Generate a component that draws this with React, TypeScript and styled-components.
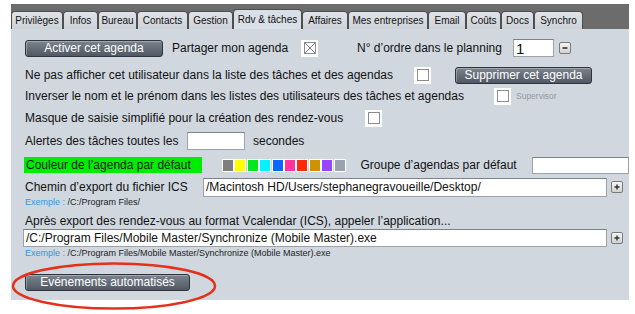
import styled, { createGlobalStyle } from 'styled-components';

const GlobalStyle = createGlobalStyle`
  body {
    margin: 0;
    background: #fff;
    font-family: "Liberation Sans", Arial, sans-serif;
  }
`;

const Page = styled.div`
  position: relative;
  width: 635px;
  height: 314px;
  padding: 4px 0 0 11px;
  box-sizing: border-box;
  overflow: hidden;
`;

const TabBar = styled.div`
  width: 618px;
  height: 25px;
  background: #6c6c6c;
  display: flex;
  align-items: flex-end;
`;

const Tab = styled.div<{ $w: number; $active?: boolean }>`
  width: ${(p) => p.$w}px;
  height: ${(p) => (p.$active ? 20 : 18)}px;
  box-sizing: border-box;
  border: 1px solid #4e4e4e;
  border-bottom: none;
  border-radius: 4px 4px 0 0;
  background: ${(p) => (p.$active ? '#d9dfe6' : 'linear-gradient(#e0e4e8, #cdd2d8)')};
  font-size: 10px;
  color: #111;
  display: flex;
  align-items: center;
  justify-content: center;
  white-space: nowrap;
`;

const Panel = styled.div`
  width: 618px;
  height: 271px;
  background: #d0d7df;
  padding: 9px 0 0 14px;
  box-sizing: border-box;
  display: flex;
  flex-direction: column;
`;

const Row = styled.div<{ $h: number; $mt?: number }>`
  display: flex;
  align-items: center;
  height: ${(p) => p.$h}px;
  margin-top: ${(p) => p.$mt ?? 0}px;
`;

const Label = styled.span<{ $w?: number; $ml?: number }>`
  flex: none;
  font-size: 12px;
  color: #111;
  white-space: nowrap;
  ${(p) => (p.$w ? `width: ${p.$w}px;` : '')}
  margin-left: ${(p) => p.$ml ?? 0}px;
`;

const ColorLabel = styled(Label)`
  background: #00ec00;
  height: 16px;
  line-height: 16px;
  padding-left: 2px;
  box-sizing: border-box;
  color: #1a1a1a;
`;

const Button = styled.button<{ $w: number; $ml?: number }>`
  flex: none;
  width: ${(p) => p.$w}px;
  height: 17px;
  margin-left: ${(p) => p.$ml ?? 0}px;
  padding: 0;
  border: 1px solid #2f343a;
  border-radius: 3px;
  background: linear-gradient(#7a838e, #505864);
  box-shadow: inset 1px 1px 0 rgba(255, 255, 255, 0.3);
  color: #fff;
  font-family: "Liberation Sans", Arial, sans-serif;
  font-size: 12px;
  line-height: 15px;
`;

const CheckBox = styled.span<{ $ml?: number }>`
  flex: none;
  width: 17px;
  height: 17px;
  margin-left: ${(p) => p.$ml ?? 0}px;
  background: #fff;
  display: flex;
  align-items: center;
  justify-content: center;

  & > span {
    width: 12px;
    height: 12px;
    box-sizing: border-box;
    border: 1px solid #8c8c8c;
    display: flex;
  }
`;

const TextBox = styled.div<{ $w: number; $h: number; $ml?: number; $size?: number }>`
  flex: none;
  width: ${(p) => p.$w}px;
  height: ${(p) => p.$h}px;
  margin-left: ${(p) => p.$ml ?? 0}px;
  box-sizing: border-box;
  background: #fff;
  border: 1px solid #9ca2a8;
  border-top-color: #7c8288;
  padding: 0 2px;
  font-size: ${(p) => p.$size ?? 12}px;
  color: #111;
  display: flex;
  align-items: center;
  white-space: nowrap;
  overflow: hidden;
`;

const MiniButton = styled.span<{ $ml?: number }>`
  flex: none;
  width: 12px;
  height: 12px;
  margin-left: ${(p) => p.$ml ?? 4}px;
  box-sizing: border-box;
  border: 1px solid #7a7a7a;
  border-radius: 2px;
  background: linear-gradient(#f4f4f4, #d2d2d2);
  display: flex;
  align-items: center;
  justify-content: center;
`;

const Swatches = styled.div<{ $ml?: number }>`
  flex: none;
  display: flex;
  gap: 0.4px;
  margin-left: ${(p) => p.$ml ?? 0}px;
`;

const Swatch = styled.span<{ $c: string }>`
  width: 12px;
  height: 13px;
  box-sizing: border-box;
  border: 1px solid #fff;
  background: ${(p) => p.$c};
`;

const Hint = styled.div<{ $mt?: number }>`
  font-size: 9px;
  color: #222;
  height: 10px;
  line-height: 10px;
  margin-top: ${(p) => p.$mt ?? 0}px;
  white-space: nowrap;

  & b {
    font-weight: normal;
    color: #2f9be2;
  }
`;

const Small = styled.span`
  font-size: 8.5px;
  color: #959aa0;
  margin-left: 5px;
`;

const Annotation = styled.svg`
  position: absolute;
  left: 11px;
  top: 262px;
`;

const tabs: [string, number][] = [
  ['Privilèges', 52],
  ['Infos', 35],
  ['Bureau', 39],
  ['Contacts', 51],
  ['Gestion', 45],
  ['Rdv & tâches', 69],
  ['Affaires', 46],
  ['Mes entreprises', 80],
  ['Email', 38],
  ['Coûts', 35],
  ['Docs', 33],
  ['Synchro', 49],
];

const colors = [
  '#7f7f7f', '#ffff00', '#00e81c', '#00f4ff', '#0a66ff',
  '#ff3399', '#ff2a0a', '#cc9200', '#9b45ff', '#9aa1b0',
];

const Check = ({ ml, checked }: { ml?: number; checked?: boolean }) => (
  <CheckBox $ml={ml}>
    <span>
      {checked && (
        <svg width="10" height="10" viewBox="0 0 10 10">
          <path d="M0 0L10 10M10 0L0 10" stroke="#7a7a7a" strokeWidth="1" />
        </svg>
      )}
    </span>
  </CheckBox>
);

const Plus = () => (
  <MiniButton>
    <svg width="8" height="8" viewBox="0 0 8 8">
      <path d="M4 1.5v5M1.5 4h5" stroke="#333" strokeWidth="1.4" />
    </svg>
  </MiniButton>
);

const Minus = () => (
  <MiniButton $ml={5}>
    <svg width="8" height="8" viewBox="0 0 8 8">
      <path d="M1.5 4h5" stroke="#333" strokeWidth="1.6" />
    </svg>
  </MiniButton>
);

export default function App() {
  return (
    <Page>
      <GlobalStyle />
      <TabBar>
        {tabs.map(([name, w]) => (
          <Tab key={name} $w={w} $active={name === 'Rdv & tâches'}>
            {name}
          </Tab>
        ))}
      </TabBar>
      <Panel>
        <Row $h={20}>
          <Button $w={138}>Activer cet agenda</Button>
          <Label $ml={9} $w={129}>Partager mon agenda</Label>
          <Check checked />
          <Label $ml={39} $w={156}>N° d’ordre dans le planning</Label>
          <TextBox $w={41} $h={18} $size={15}>1</TextBox>
          <Minus />
        </Row>
        <Row $h={18} $mt={8}>
          <Label $w={389}>Ne pas afficher cet utilisateur dans la liste des tâches et des agendas</Label>
          <Check />
          <Button $w={137} $ml={24}>Supprimer cet agenda</Button>
        </Row>
        <Row $h={18} $mt={3}>
          <Label $w={469}>Inverser le nom et le prénom dans les listes des utilisateurs des tâches et agendas</Label>
          <Check />
          <Small>Supervisor</Small>
        </Row>
        <Row $h={18} $mt={4}>
          <Label $w={340}>Masque de saisie simplifié pour la création des rendez-vous</Label>
          <Check />
        </Row>
        <Row $h={18} $mt={5}>
          <Label $w={162}>Alertes des tâches toutes les</Label>
          <TextBox $w={58} $h={18} />
          <Label $ml={8}>secondes</Label>
        </Row>
        <Row $h={18} $mt={6}>
          <ColorLabel $w={178} $ml={-1}>Couleur de l’agenda par défaut</ColorLabel>
          <Swatches $ml={20}>
            {colors.map((c) => (
              <Swatch key={c} $c={c} />
            ))}
          </Swatches>
          <Label $ml={15} $w={171}>Groupe d’agendas par défaut</Label>
          <TextBox $w={97} $h={17} />
        </Row>
        <Row $h={20} $mt={3}>
          <Label $w={178}>Chemin d’export du fichier ICS</Label>
          <TextBox $w={404} $h={19}>/Macintosh HD/Users/stephanegravoueille/Desktop/</TextBox>
          <Plus />
        </Row>
        <Hint>
          <b>Exemple :</b> /C:/Program Files/
        </Hint>
        <Row $h={16} $mt={6}>
          <Label>Après export des rendez-vous au format Vcalendar (ICS), appeler l’application...</Label>
        </Row>
        <Row $h={18}>
          <TextBox $w={584} $h={18} $ml={-2}>/C:/Program Files/Mobile Master/Synchronize (Mobile Master).exe</TextBox>
          <Plus />
        </Row>
        <Hint $mt={1}>
          <b>Exemple :</b> /C:/Program Files/Mobile Master/Synchronize (Mobile Master).exe
        </Hint>
        <Row $h={17} $mt={16}>
          <Button $w={165}>Evénements automatisés</Button>
        </Row>
      </Panel>
      <Annotation width="208" height="50" viewBox="0 0 208 50">
        <ellipse cx="103" cy="24" rx="101" ry="22.5" fill="none" stroke="#e5311c" strokeWidth="2.5" />
      </Annotation>
    </Page>
  );
}
